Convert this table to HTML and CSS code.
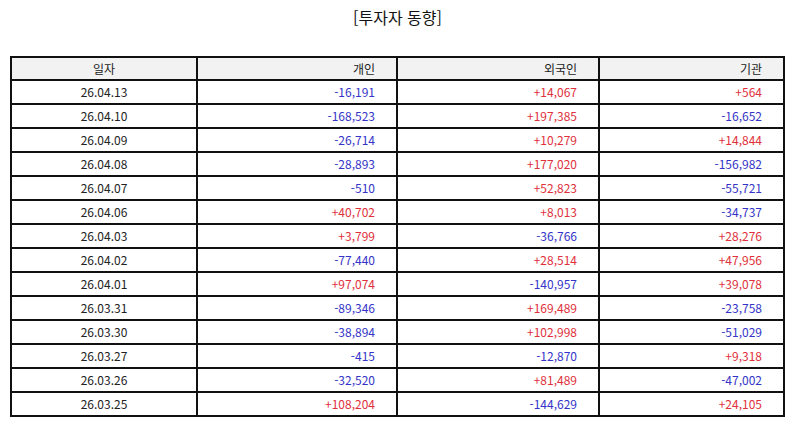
FILE: index.html
```html
<!DOCTYPE html>
<html lang="ko">
<head>
<meta charset="utf-8">
<link rel="stylesheet" href="styles.css">
</head>
<body>
<h1 class="title">[투자자 동향]</h1>
<table class="grid">
  <colgroup>
    <col class="c-date"><col class="c-ind"><col class="c-for"><col class="c-inst">
  </colgroup>
  <thead>
    <tr><th class="center">일자</th><th>개인</th><th>외국인</th><th>기관</th></tr>
  </thead>
  <tbody>
    <tr><td class="center">26.04.13</td><td class="dn">-16,191</td><td class="up">+14,067</td><td class="up">+564</td></tr>
    <tr><td class="center">26.04.10</td><td class="dn">-168,523</td><td class="up">+197,385</td><td class="dn">-16,652</td></tr>
    <tr><td class="center">26.04.09</td><td class="dn">-26,714</td><td class="up">+10,279</td><td class="up">+14,844</td></tr>
    <tr><td class="center">26.04.08</td><td class="dn">-28,893</td><td class="up">+177,020</td><td class="dn">-156,982</td></tr>
    <tr><td class="center">26.04.07</td><td class="dn">-510</td><td class="up">+52,823</td><td class="dn">-55,721</td></tr>
    <tr><td class="center">26.04.06</td><td class="up">+40,702</td><td class="up">+8,013</td><td class="dn">-34,737</td></tr>
    <tr><td class="center">26.04.03</td><td class="up">+3,799</td><td class="dn">-36,766</td><td class="up">+28,276</td></tr>
    <tr><td class="center">26.04.02</td><td class="dn">-77,440</td><td class="up">+28,514</td><td class="up">+47,956</td></tr>
    <tr><td class="center">26.04.01</td><td class="up">+97,074</td><td class="dn">-140,957</td><td class="up">+39,078</td></tr>
    <tr><td class="center">26.03.31</td><td class="dn">-89,346</td><td class="up">+169,489</td><td class="dn">-23,758</td></tr>
    <tr><td class="center">26.03.30</td><td class="dn">-38,894</td><td class="up">+102,998</td><td class="dn">-51,029</td></tr>
    <tr><td class="center">26.03.27</td><td class="dn">-415</td><td class="dn">-12,870</td><td class="up">+9,318</td></tr>
    <tr><td class="center">26.03.26</td><td class="dn">-32,520</td><td class="up">+81,489</td><td class="dn">-47,002</td></tr>
    <tr><td class="center">26.03.25</td><td class="up">+108,204</td><td class="dn">-144,629</td><td class="up">+24,105</td></tr>
  </tbody>
</table>
</body>
</html>
```

FILE: styles.css
```css
html, body {
  margin: 0;
  background: #fff;
}
body {
  padding: 0 9px 0 10px;
  font-family: "Noto Sans CJK KR", "Noto Sans", sans-serif;
  color: #222;
}
.title {
  margin: 0;
  padding-top: 5px;
  height: 56px;
  box-sizing: border-box;
  text-align: center;
  font-size: 16px;
  font-weight: 400;
  line-height: 24px;
  color: #111;
}
.grid {
  width: 100%;
  border-collapse: collapse;
  table-layout: fixed;
  font-size: 12px;
}
.c-date { width: 186px; }
.c-ind { width: 200px; }
.c-for { width: 202px; }
.c-inst { width: auto; }
.grid th, .grid td {
  border: 2px solid #111;
  height: 22px;
  padding: 0 21px 0 4px;
  text-align: right;
  font-weight: 400;
  line-height: 22px;
  white-space: nowrap;
}
.grid th {
  height: 21px;
  line-height: 21px;
  background: #f2f2f2;
  color: #222;
}
.grid .center {
  text-align: center;
  padding: 0 4px;
}
.up { color: #e0303c; }
.dn { color: #3434c8; }
```
